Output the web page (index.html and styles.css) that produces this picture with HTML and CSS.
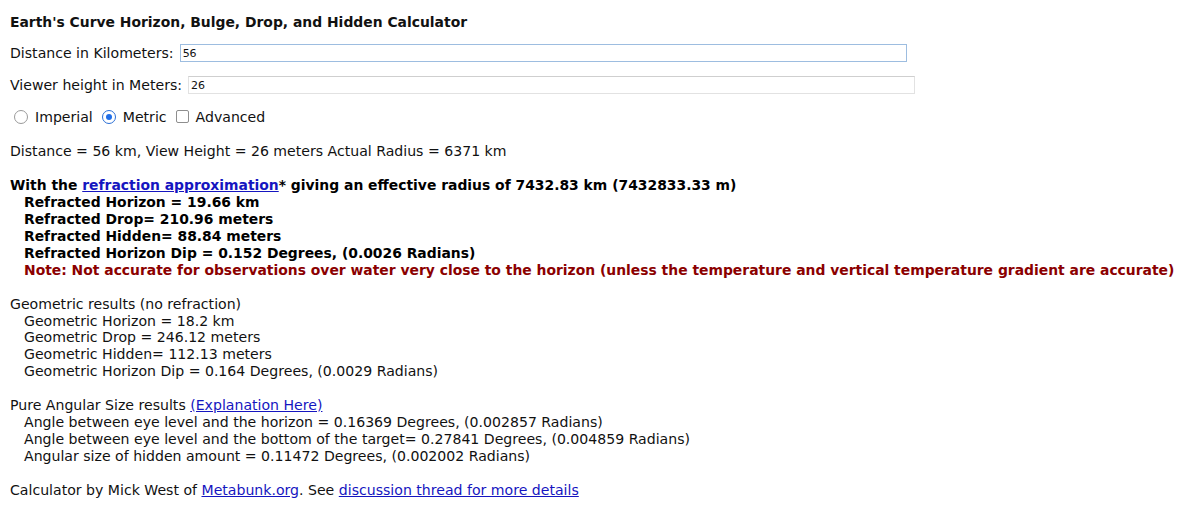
FILE: index.html
```html
<!DOCTYPE html>
<html>
<head>
<meta charset="utf-8">
<link rel="stylesheet" href="styles.css">
</head>
<body>
<div class="page">
  <div class="row title">Earth's Curve Horizon, Bulge, Drop, and Hidden Calculator</div>
  <div class="row"><span>Distance in Kilometers:</span><input class="field focus" type="text" value="56"></div>
  <div class="row"><span>Viewer height in Meters:</span><input class="field" type="text" value="26"></div>
  <div class="row opts">
    <span class="radio"></span><span class="lbl">Imperial</span>
    <span class="radio on"></span><span class="lbl">Metric</span>
    <span class="check"></span><span class="lbl">Advanced</span>
  </div>
  <div class="text">
    <div>Distance = 56 km, View Height = 26 meters Actual Radius = 6371 km</div>
    <div class="blank"></div>
    <div class="bold">
      <div>With the <a href="#">refraction approximation</a>* giving an effective radius of 7432.83 km (7432833.33 m)</div>
      <div class="ind">Refracted Horizon = 19.66 km</div>
      <div class="ind">Refracted Drop= 210.96 meters</div>
      <div class="ind">Refracted Hidden= 88.84 meters</div>
      <div class="ind">Refracted Horizon Dip = 0.152 Degrees, (0.0026 Radians)</div>
      <div class="ind note">Note: Not accurate for observations over water very close to the horizon (unless the temperature and vertical temperature gradient are accurate)</div>
    </div>
    <div class="blank"></div>
    <div>Geometric results (no refraction)</div>
    <div class="ind">Geometric Horizon = 18.2 km</div>
    <div class="ind">Geometric Drop = 246.12 meters</div>
    <div class="ind">Geometric Hidden= 112.13 meters</div>
    <div class="ind">Geometric Horizon Dip = 0.164 Degrees, (0.0029 Radians)</div>
    <div class="blank"></div>
    <div>Pure Angular Size results <a href="#">(Explanation Here)</a></div>
    <div class="ind">Angle between eye level and the horizon = 0.16369 Degrees, (0.002857 Radians)</div>
    <div class="ind">Angle between eye level and the bottom of the target= 0.27841 Degrees, (0.004859 Radians)</div>
    <div class="ind">Angular size of hidden amount = 0.11472 Degrees, (0.002002 Radians)</div>
    <div class="blank"></div>
    <div>Calculator by Mick West of <a href="#">Metabunk.org</a>. See <a href="#">discussion thread for more details</a></div>
  </div>
</div>
</body>
</html>
```
FILE: styles.css
```css
html, body { margin: 0; padding: 0; background: #fff; }
body { font-family: "DejaVu Sans", Verdana, sans-serif; font-size: 14.1px; color: #111; }
.page { padding: 5px 0 0 10px; }
.row { height: 32px; box-sizing: border-box; display: flex; align-items: center; white-space: nowrap; }
.title { font-weight: bold; font-size: 13.9px; padding-top: 2px; }
.field {
  margin-left: 6px; width: 727px; height: 18px; box-sizing: border-box;
  border: 1px solid #e2e2e2; border-top-color: #cfcfcf; padding: 0 2px;
  font-family: "DejaVu Sans", Verdana, sans-serif; font-size: 11px; color: #111;
  outline: none; background: #fff;
}
.field.focus { border-color: #9dbde0; }
.opts { padding-left: 4px; height: 31px; }
.radio {
  width: 12px; height: 12px; border: 1px solid #9a9a9a; border-radius: 50%;
  box-sizing: content-box; margin-right: 7px; position: relative;
}
.radio.on { border-color: #2a6fd6; }
.radio.on::after {
  content: ""; position: absolute; left: 3px; top: 3px; width: 6px; height: 6px;
  border-radius: 50%; background: #1f6ee8;
}
.check {
  width: 11px; height: 11px; border: 1px solid #8e8e8e; border-radius: 2px;
  margin-right: 7px;
}
.lbl { margin-right: 9px; }
.text { margin-top: 11px; line-height: 16.95px; white-space: nowrap; }
.blank { height: 16.95px; }
.bold { font-weight: bold; color: #000; font-size: 13.9px; }
.ind { padding-left: 14px; }
.note { color: #8b0000; }
a { color: #1515c0; text-decoration: underline; }
```
